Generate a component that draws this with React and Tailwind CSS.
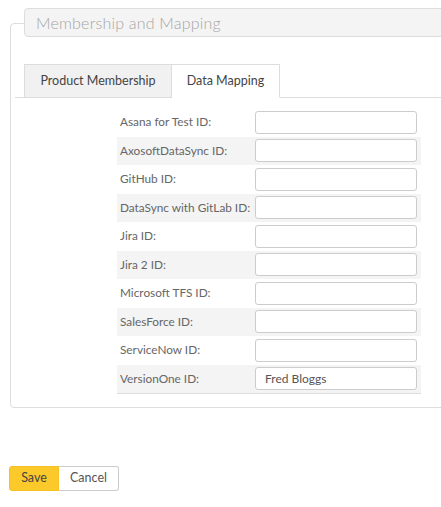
import React from "react";

const rows = [
  ["Asana for Test ID:", ""],
  ["AxosoftDataSync ID:", ""],
  ["GitHub ID:", ""],
  ["DataSync with GitLab ID:", ""],
  ["Jira ID:", ""],
  ["Jira 2 ID:", ""],
  ["Microsoft TFS ID:", ""],
  ["SalesForce ID:", ""],
  ["ServiceNow ID:", ""],
  ["VersionOne ID:", "Fred Bloggs"],
];

export default function App() {
  return (
    <div
      className="w-[441px] h-[507px] bg-white overflow-hidden relative text-[#555]"
      style={{ fontFamily: "Lato, 'Liberation Sans', sans-serif" }}
    >
      <div className="pt-[8px] pl-[10px]">
        <div className="relative w-[460px] h-[385px] mt-[15px] border border-[#ddd] rounded-[4px]">
          <div className="absolute left-[13px] top-[-16px] w-[430px] h-[29px] bg-[#f4f4f4] border border-[#ddd] rounded-[4px] pl-[11px] flex items-center">
            <span className="text-[16px] font-light text-[#a5a5a5] tracking-[0.2px]">
              Membership and Mapping
            </span>
          </div>
          <div className="mt-[40px] ml-[4px] flex border-b border-[#ddd] h-[34px]">
            <div className="ml-[9px] w-[148px] bg-[#f1f1f1] border border-[#ddd] border-b-0 flex items-center justify-center text-[12.5px] text-[#444]">
              Product Membership
            </div>
            <div className="w-[108px] bg-white border border-[#ddd] border-l-0 border-b-white -mb-px flex items-center justify-center text-[12.5px] text-[#444]">
              Data Mapping
            </div>
          </div>
          <div className="ml-[106px] mt-[10px] w-[304px] border-b border-[#ddd]">
            {rows.map(([label, val], i) => (
              <div
                key={label}
                className={`flex items-center h-[28.5px] ${i % 2 === 1 ? "bg-[#f4f4f4]" : ""}`}
              >
                <div className="w-[138px] pl-[3px] text-[11.8px] text-[#666] whitespace-nowrap">
                  {label}
                </div>
                <div className="w-[162px] h-[23px] border border-[#ccc] rounded-[3px] bg-white flex items-center pl-[9px] text-[12px] text-[#555]">
                  {val}
                </div>
              </div>
            ))}
          </div>
        </div>
      </div>
      <div className="absolute left-[9px] top-[466px] flex h-[25px] text-[12.5px]">
        <div className="w-[50px] bg-[#fcc92b] border border-[#f5c020] rounded-l-[3px] flex items-center justify-center text-[#444]">
          Save
        </div>
        <div className="w-[60px] bg-white border border-[#ccc] border-l-0 rounded-r-[3px] flex items-center justify-center text-[#555]">
          Cancel
        </div>
      </div>
    </div>
  );
}
